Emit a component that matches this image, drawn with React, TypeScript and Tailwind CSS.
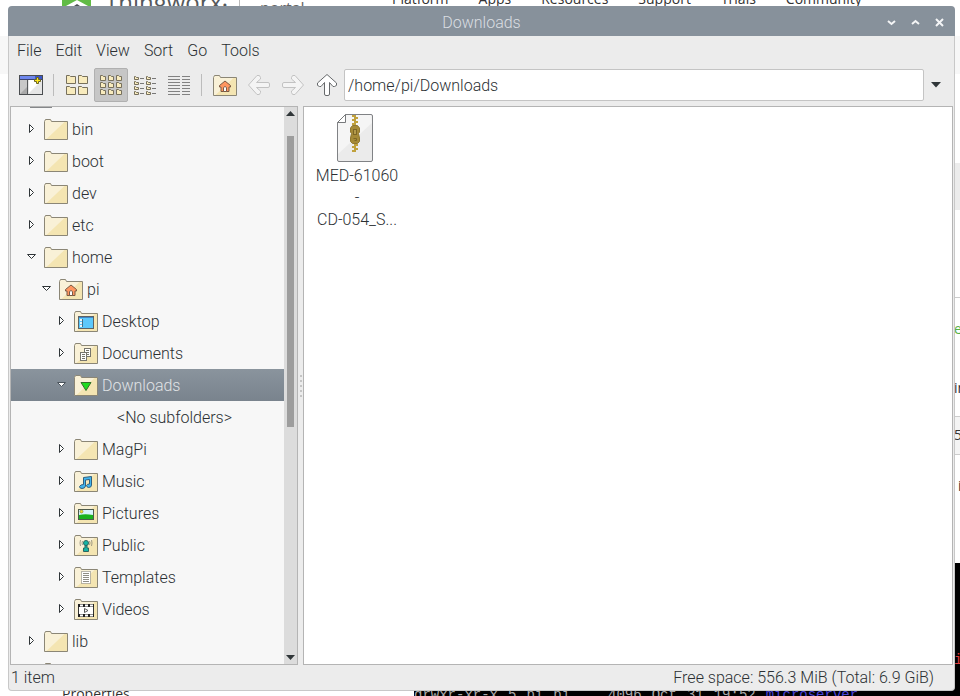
import { useState, type ReactNode } from 'react';
import clsx from 'clsx';

type Emblem =
  | 'home'
  | 'desktop'
  | 'documents'
  | 'downloads'
  | 'music'
  | 'pictures'
  | 'public'
  | 'templates'
  | 'videos';

type TreeNode = {
  label?: string;
  depth: number;
  open?: boolean;
  emblem?: Emblem;
};

const nodes: TreeNode[] = [
  { label: 'bin', depth: 1 },
  { label: 'boot', depth: 1 },
  { label: 'dev', depth: 1 },
  { label: 'etc', depth: 1 },
  { label: 'home', depth: 1, open: true },
  { label: 'pi', depth: 2, open: true, emblem: 'home' },
  { label: 'Desktop', depth: 3, emblem: 'desktop' },
  { label: 'Documents', depth: 3, emblem: 'documents' },
  { label: 'Downloads', depth: 3, open: true, emblem: 'downloads' },
  { label: '<No subfolders>', depth: 4 },
  { label: 'MagPi', depth: 3 },
  { label: 'Music', depth: 3, emblem: 'music' },
  { label: 'Pictures', depth: 3, emblem: 'pictures' },
  { label: 'Public', depth: 3, emblem: 'public' },
  { label: 'Templates', depth: 3, emblem: 'templates' },
  { label: 'Videos', depth: 3, emblem: 'videos' },
  { label: 'lib', depth: 1 },
  { depth: 1 },
];

const indent: Record<number, string> = {
  1: 'pl-[13px]',
  2: 'pl-[28px]',
  3: 'pl-[43px]',
  4: 'pl-[106px]',
};

const emblems: Record<Emblem, ReactNode> = {
  home: (
    <>
      <path d="M12 6 L6.5 10.5 V12 H8 V16.5 H16 V12 H17.5 V10.5 Z" fill="#ff9660" stroke="#7a5a44" />
      <path d="M10.5 16.5 V12.5 Q12 10.5 13.5 12.5 V16.5 Z" fill="#fff" stroke="#7a5a44" />
    </>
  ),
  desktop: (
    <>
      <rect x="4.5" y="5.5" width="15" height="12" fill="#5cc8fb" stroke="#5d6264" />
      <path d="M5 6.5 H19" stroke="#3f87c7" />
      <path d="M6 9 H8 M6 12 H8 M6 15 H8" stroke="#e8f4fb" strokeWidth="2" />
      <path d="M8.5 8 V16" stroke="#4a6f84" />
    </>
  ),
  documents: (
    <>
      <rect x="10.5" y="5.5" width="6" height="8" fill="#fff" stroke="#77756c" />
      <path d="M12 7.5 H15 M12 9.5 H15 M12 11.5 H15" stroke="#77756c" />
      <rect x="6.5" y="9.5" width="6" height="8" fill="#fff" stroke="#77756c" />
      <path d="M8 11.5 H11 M8 13.5 H11 M8 15.5 H11" stroke="#77756c" />
    </>
  ),
  downloads: <path d="M7 7.5 H17 L12 15.5 Z" fill="#20dc20" stroke="#33702a" />,
  music: (
    <path
      d="M9.5 6.5 L17.5 5.5 V14 Q17.5 16.5 14.5 16.5 Q12.5 16 12.5 14.5 Q13 13 15.5 13 V8.5 L11.5 9 V15 Q11 17.5 8 17.5 Q5.5 17.5 5.5 15.5 Q6.5 13.5 9.5 13.5 Z"
      fill="#41b4ee"
      stroke="#2f5f7d"
      strokeLinejoin="round"
    />
  ),
  pictures: (
    <>
      <rect x="4.5" y="6.5" width="15" height="10" fill="#d8f4fc" stroke="#4c5a4c" />
      <path d="M5 12 Q11 10.5 19 12 V16 H5 Z" fill="#19b21e" />
      <circle cx="7.5" cy="8.5" r="1.5" fill="#f5dc2e" stroke="#7c7434" strokeWidth=".6" />
    </>
  ),
  public: (
    <>
      <circle cx="12" cy="8" r="2.5" fill="#13b5a6" stroke="#2c6660" />
      <path d="M11 10.5 H13 V13 H14.5 V16.5 H9.5 V13 H11 Z" fill="#13b5a6" stroke="#2c6660" />
      <path
        d="M8.5 6 Q7.5 8 8.5 10 M15.5 6 Q16.5 8 15.5 10 M6.5 5 Q5.5 8 6.5 11 M17.5 5 Q18.5 8 17.5 11"
        fill="none"
        stroke="#8b8878"
        strokeWidth=".8"
      />
    </>
  ),
  templates: (
    <>
      <rect x="7.5" y="4.5" width="9" height="12" fill="#fff" stroke="#77756c" strokeDasharray="1 1" />
      <path d="M9 6.5 H15 M9 8.5 H15 M9 10.5 H15 M9 12.5 H15 M9 14.5 H15" stroke="#8f8d85" />
    </>
  ),
  videos: (
    <>
      <rect x="4.5" y="5.5" width="15" height="12" fill="#fff" stroke="#333" />
      <path d="M4 6.5 H20 M4 16.5 H20" stroke="#222" strokeWidth="3" />
      <path d="M6 6.5 H19 M6 16.5 H19" stroke="#fff" strokeWidth="2" strokeDasharray="3 2" />
      <path d="M10.5 9.5 V13.5 L14 11.5 Z" fill="#fff" stroke="#555" />
    </>
  ),
};

function FolderIcon({ emblem }: { emblem?: Emblem }) {
  return (
    <svg width="24" height="21" viewBox="0 0 24 21" className="shrink-0">
      <path d="M.5 2.5 L1.5 .5 H6.5 L7.5 2.5 H23.5 V20.5 H.5 Z" fill="#f4e5b2" />
      <path d="M.5 2.5 L1.5 .5 H6.5 L7.5 2.5 H21 L2 20.5 H.5 Z" fill="#f9f1d7" />
      <path
        d="M.5 2.5 L1.5 .5 H6.5 L7.5 2.5 H23.5 V20.5 H.5 Z"
        fill="none"
        stroke="#8b8676"
        strokeLinejoin="round"
      />
      {emblem && emblems[emblem]}
    </svg>
  );
}

function Expander({ open, selected }: { open?: boolean; selected?: boolean }) {
  const stroke = selected ? '#4b545c' : '#2f3538';
  return (
    <svg width="15" height="12" viewBox="0 0 15 12" className="mr-[5px] shrink-0">
      {open ? (
        <path d="M3.5 3.5 H11.5 L7.5 7.5 Z" fill="#fff" stroke={stroke} />
      ) : (
        <path d="M5.5 1.5 V9.5 L9.5 5.5 Z" fill="#fff" stroke={stroke} />
      )}
    </svg>
  );
}

function MiniFolder({ x, y, w, h }: { x: number; y: number; w: number; h: number }) {
  return (
    <path
      d={`M${x} ${y} h${Math.round(w / 3)} l1 1 H${x + w} V${y + h} H${x} Z`}
      fill="#f8ebbd"
      stroke="#77705c"
    />
  );
}

function NewWindowIcon() {
  return (
    <svg width="24" height="21" viewBox="0 0 24 21">
      <rect x=".5" y=".5" width="23" height="19" fill="#e6e6e6" stroke="#4a4d50" />
      <path d="M10 5 H23 L10 18 Z" fill="#fff" />
      <path d="M1 5 H8 V19 H1 Z" fill="#a9a9a9" />
      <path d="M1 5 H8 V12 L1 19 Z" fill="#c8c8c8" />
      <path d="M8.5 4 V19" stroke="#55585a" />
      <path d="M1 1 H23 V4 H1 Z" fill="#6d86ec" />
      <path d="M16 1 H23 V4 H16 Z" fill="#3a56c8" />
      <path d="M.5 4.5 H23.5" stroke="#3b4270" />
      <path
        d="M17.5 2.5 H19.5 V4.5 H21.5 V6.5 H19.5 V8.5 H17.5 V6.5 H15.5 V4.5 H17.5 Z"
        fill="#ffe81c"
        stroke="#6b6420"
      />
    </svg>
  );
}

function LargeIcons() {
  return (
    <svg width="23" height="21" viewBox="0 0 23 21">
      {[0.5, 12.5].map((x) =>
        [0.5, 11.5].map((y) => <MiniFolder key={`${x}-${y}`} x={x} y={y} w={9} h={8} />)
      )}
    </svg>
  );
}

function SmallIcons() {
  return (
    <svg width="23" height="21" viewBox="0 0 23 21">
      {[0.5, 8.5, 16.5].map((x) =>
        [0.5, 7.5, 14.5].map((y) => <MiniFolder key={`${x}-${y}`} x={x} y={y} w={5} h={5} />)
      )}
    </svg>
  );
}

function CompactIcons() {
  return (
    <svg width="23" height="21" viewBox="0 0 23 21">
      {[0.5, 12.5].map((x) =>
        [1.5, 6.5, 11.5, 16.5].map((y) => (
          <g key={`${x}-${y}`}>
            <MiniFolder x={x} y={y} w={4} h={3} />
            <path d={`M${x + 5.5} ${y + 2} h4`} stroke="#777" />
          </g>
        ))
      )}
    </svg>
  );
}

function ListIcon() {
  return (
    <svg width="23" height="21" viewBox="0 0 23 21">
      {[1.5, 4.5, 7.5, 10.5, 13.5, 16.5, 19.5].map((y) => (
        <path key={y} d={`M0 ${y} H12 M14 ${y} H22`} stroke="#828282" />
      ))}
    </svg>
  );
}

function ArrowIcon({ dir, disabled }: { dir: 'left' | 'right' | 'up'; disabled?: boolean }) {
  return (
    <svg width="22" height="22" viewBox="0 0 22 22">
      <path
        d="M.5 11 L9 1.5 Q12 .5 12.5 3.5 V5 L8.5 8.5 H20 Q21.5 8.5 21.5 10 V12 Q21.5 13.5 20 13.5 H8.5 L12.5 17 V18.5 Q12 21.5 9 20.5 Z"
        transform={dir === 'right' ? 'rotate(180 11 11)' : dir === 'up' ? 'rotate(90 11 11)' : undefined}
        fill={disabled ? '#f4f4f4' : '#fff'}
        stroke={disabled ? '#c2c2c2' : '#66696b'}
        strokeLinejoin="round"
      />
    </svg>
  );
}

function ArchiveIcon() {
  return (
    <svg width="36" height="48" viewBox="0 0 36 48" className="mr-1">
      <path d="M8.5 .5 H34 Q35.5 .5 35.5 2 V46 Q35.5 47.5 34 47.5 H2 Q.5 47.5 .5 46 V8.5 Z" fill="#ebebeb" />
      <path d="M8.5 .5 H34 L35 9 L1 40 V8.5 Z" fill="#f5f5f5" />
      <path
        d="M8.5 .5 H34 Q35.5 .5 35.5 2 V46 Q35.5 47.5 34 47.5 H2 Q.5 47.5 .5 46 V8.5 Z"
        fill="none"
        stroke="#808285"
      />
      <path d="M8.5 .5 V8.5 H.5 Z" fill="#fff" stroke="#77797b" />
      <path
        d="M15 2 H18 M18 4 H21 M15 6 H18 M18 8 H21 M15 10 H18 M18 31 H21 M15 33 H18 M18 35 H21 M15 37 H18"
        stroke="#c0a13c"
        strokeWidth="2"
      />
      <path d="M18 1 V11 M18 30 V38" stroke="#c0a13c" strokeWidth="2" />
      <path
        d="M15.5 11.5 H20.5 L22.5 14 V18 L21.5 19.5 L22.5 24 V27.5 L20.5 29.5 H15.5 L13.5 27.5 V24 L14.5 19.5 L13.5 18 V14 Z"
        fill="#a58a37"
        stroke="#8f7730"
        strokeLinejoin="round"
      />
      <rect x="16.5" y="15.5" width="3" height="5" fill="#b39a4c" stroke="#7c6626" />
      <path d="M16.5 24.5 H19.5 V26.5 H17.5" fill="none" stroke="#7c6626" />
    </svg>
  );
}

function ToolButton({ label, active, children }: { label: string; active?: boolean; children: ReactNode }) {
  return (
    <button
      type="button"
      aria-label={label}
      className={clsx(
        'flex size-[34px] shrink-0 items-center justify-center rounded-xs',
        active && 'border border-[#b0b0b0] bg-[#c6c6c6]'
      )}
    >
      {children}
    </button>
  );
}

function ToolSeparator() {
  return <div className="mr-1.5 ml-[5px] h-[22px] w-px shrink-0 bg-[#bcbcbc]" />;
}

// Browser page that lies behind the file manager
function Desktop() {
  return (
    <div className="h-full text-[#333]">
      <div className="flex h-9 items-start overflow-hidden pl-[62px] whitespace-nowrap">
        <svg width="29" height="10" viewBox="0 0 29 10" className="shrink-0">
          <path d="M0 0 H29 V10 H0 Z" fill="#61bb46" />
          <path d="M4 6 L15 0 L26 6 V10 H4 Z" fill="#fff" />
          <path d="M9 8 L15 4 L21 8 V10 H9 Z" fill="#4a4f53" />
        </svg>
        <span className="-mt-[14px] ml-3.5 w-[120px] font-['Open_Sans'] text-2xl leading-[32px] text-[#55595c]">
          Thingworx<span className="text-sm">•</span>
        </span>
        <span className="ml-3.5 h-2.5 w-px shrink-0 bg-[#bbb]" />
        <span className="-mt-0.5 ml-5 w-[132px] font-['Open_Sans'] text-base leading-5 text-[#666]">portal</span>
        <nav className="-mt-[11px] flex gap-[30px] font-['Open_Sans'] text-sm leading-5">
          <span>Platform</span>
          <span>Apps</span>
          <span>Resources</span>
          <span>Support</span>
          <span>Trials</span>
          <span>Community</span>
        </nav>
      </div>
      <div className="h-[38px] bg-[#f7f7f7]" />
      <div className="mt-[89px] ml-auto w-[6px] overflow-hidden font-['Open_Sans'] text-sm leading-5 whitespace-nowrap">
        <div className="h-[47px] bg-[#ececec]" />
        <div className="mt-[87px] border-t border-[#ccc] pt-[21px] text-[#55b045]">e</div>
        <div className="mt-[39px]">in</div>
        <div className="mt-[18px] h-[39px] border-y border-[#ccc] bg-[#f4f4f4] pt-2">5:</div>
        <div className="mt-[21px] pl-1">i</div>
      </div>
    </div>
  );
}

function TitleBar() {
  return (
    <header className="grid h-[30px] shrink-0 grid-cols-[1fr_auto_1fr] items-center rounded-t bg-[#87919b] pt-0.5">
      <h1 className="col-start-2 pt-0.5 text-[#dadee2]">Downloads</h1>
      <div className="flex justify-end pr-1">
        <button type="button" aria-label="Minimise" className="flex h-6 w-6 items-center justify-center">
          <svg width="9" height="9" viewBox="0 0 9 9" fill="none" stroke="#f4f5f6" strokeWidth="2">
            <path d="M1 3 L4.5 6 L8 3" />
          </svg>
        </button>
        <button type="button" aria-label="Maximise" className="flex h-6 w-6 items-center justify-center">
          <svg width="9" height="9" viewBox="0 0 9 9" fill="none" stroke="#f4f5f6" strokeWidth="2">
            <path d="M1 6 L4.5 3 L8 6" />
          </svg>
        </button>
        <button type="button" aria-label="Close" className="flex h-6 w-6 items-center justify-center">
          <svg width="9" height="9" viewBox="0 0 9 9" fill="none" stroke="#f4f5f6" strokeWidth="2">
            <path d="M1 1 L8 8 M8 1 L1 8" />
          </svg>
        </button>
      </div>
    </header>
  );
}

function Toolbar() {
  const [path, setPath] = useState('/home/pi/Downloads');

  return (
    <div className="flex h-[38px] shrink-0 items-center pl-[5px]">
      <ToolButton label="New window"><NewWindowIcon /></ToolButton>
      <ToolSeparator />
      <ToolButton label="Icon view"><LargeIcons /></ToolButton>
      <ToolButton label="Thumbnail view" active><SmallIcons /></ToolButton>
      <ToolButton label="Compact view"><CompactIcons /></ToolButton>
      <ToolButton label="Detailed list"><ListIcon /></ToolButton>
      <ToolSeparator />
      <ToolButton label="Home"><FolderIcon emblem="home" /></ToolButton>
      <ToolButton label="Back"><ArrowIcon dir="left" disabled /></ToolButton>
      <ToolButton label="Forward"><ArrowIcon dir="right" disabled /></ToolButton>
      <ToolButton label="Up"><ArrowIcon dir="up" /></ToolButton>
      <input
        type="text"
        aria-label="Location"
        value={path}
        onChange={(e) => setPath(e.target.value)}
        className="h-8 min-w-0 flex-1 rounded-xs border border-[#c4c4c4] bg-white px-[3px] outline-none"
      />
      <button type="button" aria-label="Show locations" className="flex h-8 w-[30px] items-center pl-[7px]">
        <svg width="10" height="6" viewBox="0 0 10 6">
          <path d="M0 0 H10 L5 5.5 Z" fill="#303639" />
        </svg>
      </button>
    </div>
  );
}

function TreeRow({ node, selected, onSelect }: { node: TreeNode; selected: boolean; onSelect: () => void }) {
  return (
    <li>
      <button
        type="button"
        onClick={onSelect}
        aria-label={node.label ? undefined : 'Folder'}
        className={clsx(
          'flex h-8 w-full items-center text-left whitespace-nowrap',
          indent[node.depth],
          selected && 'bg-linear-to-b from-[#8a949d] to-[#79838d] text-[#e0e3e6]'
        )}
      >
        {node.depth < 4 && (
          <>
            <Expander open={node.open} selected={selected} />
            <span className="mr-1 pt-px"><FolderIcon emblem={node.emblem} /></span>
          </>
        )}
        {node.label && <span className="pt-0.5">{node.label}</span>}
      </button>
    </li>
  );
}

function Sidebar() {
  const [selected, setSelected] = useState(8);

  return (
    <aside className="flex w-[288px] shrink-0 overflow-hidden border border-[#b4b4b4] bg-[#f7f7f7]">
      <div className="min-w-0 flex-1 overflow-hidden">
        {/* bottom edge of the root entry, the list is scrolled past it */}
        <div className="ml-[19px] h-px w-[22px] bg-[#85878a]" />
        <ul className="pt-[5px]">
          {nodes.map((node, i) => (
            <TreeRow key={i} node={node} selected={i === selected} onSelect={() => setSelected(i)} />
          ))}
        </ul>
      </div>
      <div className="flex w-[13px] shrink-0 flex-col items-center bg-[#dcdcdc] py-1">
        <svg width="9" height="5" viewBox="0 0 9 5" className="shrink-0">
          <path d="M0 5 H9 L4.5 0 Z" fill="#303639" />
        </svg>
        <div className="flex w-full flex-1 justify-center pt-5">
          <div className="h-[56%] w-[7px] bg-[#9d9d9d]" />
        </div>
        <svg width="9" height="5" viewBox="0 0 9 5" className="shrink-0">
          <path d="M0 0 H9 L4.5 5 Z" fill="#303639" />
        </svg>
      </div>
    </aside>
  );
}

export default function App() {
  return (
    <main className="relative h-screen overflow-hidden bg-white">
      <Desktop />

      <p className="absolute top-[686px] left-[62px] font-['Open_Sans'] text-sm leading-4 text-[#333]">Properties</p>

      {/* terminal window */}
      <div className="absolute top-[563px] right-0 bottom-0 left-[414px] overflow-hidden bg-black font-['Liberation_Mono'] text-sm leading-4 text-[#aaa]">
        <div className="mt-[89px] ml-auto w-[6px] text-[#e03c3c]">i</div>
        <div className="mt-[19px] flex gap-2.5 whitespace-nowrap">
          <span>drwxr-xr-x</span>
          <span>5</span>
          <span>pi</span>
          <span className="mr-7">pi</span>
          <span>4096</span>
          <span>Oct</span>
          <span>31</span>
          <span>19:52</span>
          <span className="text-[#4a42d8]">microserver</span>
        </div>
      </div>

      {/* file manager window */}
      <section className="absolute top-1.5 right-[5px] bottom-[5px] left-2 flex flex-col font-['Roboto'] text-base leading-[22px] font-light text-[#2b3033]">
        <TitleBar />
        <div className="flex min-h-0 flex-1 flex-col rounded-b-sm border border-t-0 border-[#c8c8c8] bg-[#ececec]">
          <nav className="flex h-[30px] shrink-0 items-center pl-px">
            {['File', 'Edit', 'View', 'Sort', 'Go', 'Tools'].map((item) => (
              <button key={item} type="button" className="px-[7px]">
                {item}
              </button>
            ))}
          </nav>
          <Toolbar />
          <div className="mt-0.5 flex min-h-0 flex-1 px-px">
            <Sidebar />
            <div className="flex w-[5px] shrink-0 flex-col items-center justify-center gap-[3px]">
              {[0, 1, 2, 3, 4].map((dot) => (
                <span key={dot} className="h-0.5 w-0.5 bg-[#c4c4c4]" />
              ))}
            </div>
            <div className="min-w-0 flex-1 border border-[#b4b4b4] bg-white">
              <button type="button" className="flex w-[106px] flex-col items-center pt-[7px] text-center">
                <ArchiveIcon />
                <span className="pt-[3px]">
                  MED-61060
                  <br />-<br />
                  CD-054_S...
                </span>
              </button>
            </div>
          </div>
          <footer className="flex h-[25px] shrink-0 items-center justify-between pr-5 pl-0.5">
            <span>1 item</span>
            <span>Free space: 556.3 MiB (Total: 6.9 GiB)</span>
          </footer>
        </div>
      </section>
    </main>
  );
}
